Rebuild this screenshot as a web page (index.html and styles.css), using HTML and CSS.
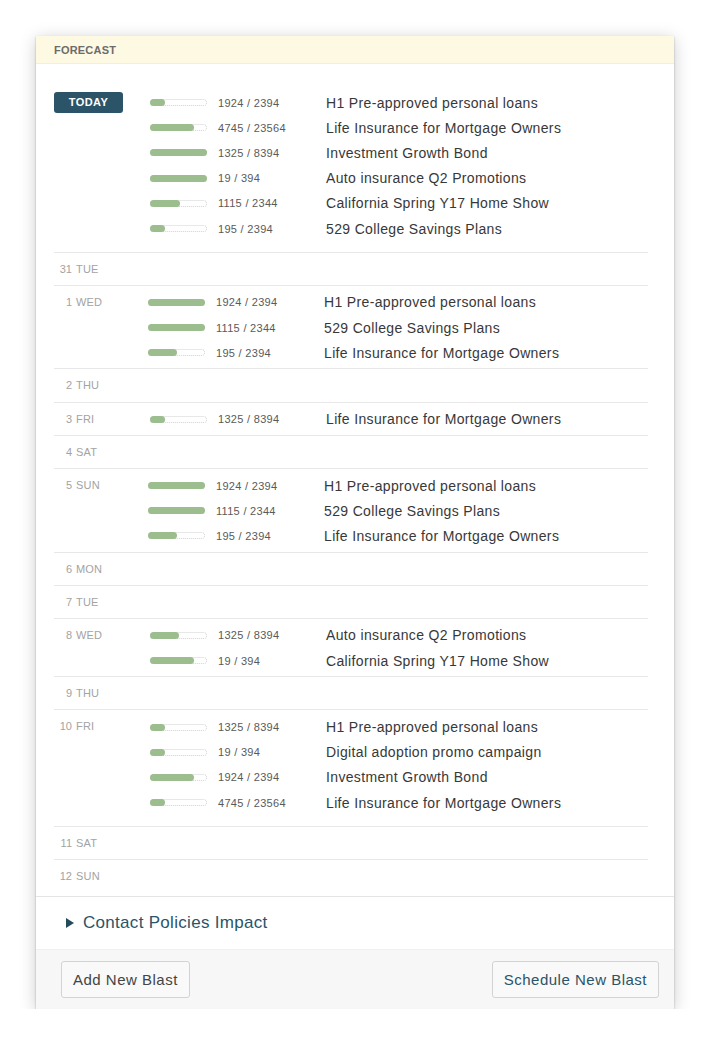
FILE: index.html
```html
<!DOCTYPE html>
<html>
<head>
<meta charset="utf-8">
<link rel="stylesheet" href="styles.css">
</head>
<body>
<div class="card">
  <div class="header">FORECAST</div>
  <div class="body">
    <div class="day today">
      <div class="label"><span class="badge">TODAY</span></div>
      <div class="items">
        <div class="item"><div class="bar"><div class="fill" style="width:15px"></div></div><span class="count">1924 / 2394</span><span class="name">H1 Pre-approved personal loans</span></div>
        <div class="item"><div class="bar"><div class="fill" style="width:44px"></div></div><span class="count">4745 / 23564</span><span class="name">Life Insurance for Mortgage Owners</span></div>
        <div class="item"><div class="bar"><div class="fill" style="width:57px"></div></div><span class="count">1325 / 8394</span><span class="name">Investment Growth Bond</span></div>
        <div class="item"><div class="bar"><div class="fill" style="width:57px"></div></div><span class="count">19 / 394</span><span class="name">Auto insurance Q2 Promotions</span></div>
        <div class="item"><div class="bar"><div class="fill" style="width:30px"></div></div><span class="count">1115 / 2344</span><span class="name">California Spring Y17 Home Show</span></div>
        <div class="item"><div class="bar"><div class="fill" style="width:15px"></div></div><span class="count">195 / 2394</span><span class="name">529 College Savings Plans</span></div>
      </div>
    </div>
    <div class="day"><div class="label"><span class="num">31</span><span class="dow">TUE</span></div></div>
    <div class="day">
      <div class="label"><span class="num">1</span><span class="dow">WED</span></div>
      <div class="items shift">
        <div class="item"><div class="bar"><div class="fill" style="width:57px"></div></div><span class="count">1924 / 2394</span><span class="name">H1 Pre-approved personal loans</span></div>
        <div class="item"><div class="bar"><div class="fill" style="width:57px"></div></div><span class="count">1115 / 2344</span><span class="name">529 College Savings Plans</span></div>
        <div class="item"><div class="bar"><div class="fill" style="width:29px"></div></div><span class="count">195 / 2394</span><span class="name">Life Insurance for Mortgage Owners</span></div>
      </div>
    </div>
    <div class="day"><div class="label"><span class="num">2</span><span class="dow">THU</span></div></div>
    <div class="day">
      <div class="label"><span class="num">3</span><span class="dow">FRI</span></div>
      <div class="items">
        <div class="item"><div class="bar"><div class="fill" style="width:15px"></div></div><span class="count">1325 / 8394</span><span class="name">Life Insurance for Mortgage Owners</span></div>
      </div>
    </div>
    <div class="day"><div class="label"><span class="num">4</span><span class="dow">SAT</span></div></div>
    <div class="day">
      <div class="label"><span class="num">5</span><span class="dow">SUN</span></div>
      <div class="items shift">
        <div class="item"><div class="bar"><div class="fill" style="width:57px"></div></div><span class="count">1924 / 2394</span><span class="name">H1 Pre-approved personal loans</span></div>
        <div class="item"><div class="bar"><div class="fill" style="width:57px"></div></div><span class="count">1115 / 2344</span><span class="name">529 College Savings Plans</span></div>
        <div class="item"><div class="bar"><div class="fill" style="width:29px"></div></div><span class="count">195 / 2394</span><span class="name">Life Insurance for Mortgage Owners</span></div>
      </div>
    </div>
    <div class="day"><div class="label"><span class="num">6</span><span class="dow">MON</span></div></div>
    <div class="day"><div class="label"><span class="num">7</span><span class="dow">TUE</span></div></div>
    <div class="day">
      <div class="label"><span class="num">8</span><span class="dow">WED</span></div>
      <div class="items">
        <div class="item"><div class="bar"><div class="fill" style="width:29px"></div></div><span class="count">1325 / 8394</span><span class="name">Auto insurance Q2 Promotions</span></div>
        <div class="item"><div class="bar"><div class="fill" style="width:44px"></div></div><span class="count">19 / 394</span><span class="name">California Spring Y17 Home Show</span></div>
      </div>
    </div>
    <div class="day"><div class="label"><span class="num">9</span><span class="dow">THU</span></div></div>
    <div class="day tall">
      <div class="label"><span class="num">10</span><span class="dow">FRI</span></div>
      <div class="items">
        <div class="item"><div class="bar"><div class="fill" style="width:15px"></div></div><span class="count">1325 / 8394</span><span class="name">H1 Pre-approved personal loans</span></div>
        <div class="item"><div class="bar"><div class="fill" style="width:15px"></div></div><span class="count">19 / 394</span><span class="name">Digital adoption promo campaign</span></div>
        <div class="item"><div class="bar"><div class="fill" style="width:44px"></div></div><span class="count">1924 / 2394</span><span class="name">Investment Growth Bond</span></div>
        <div class="item"><div class="bar"><div class="fill" style="width:15px"></div></div><span class="count">4745 / 23564</span><span class="name">Life Insurance for Mortgage Owners</span></div>
      </div>
    </div>
    <div class="day"><div class="label"><span class="num">11</span><span class="dow">SAT</span></div></div>
    <div class="day last"><div class="label"><span class="num">12</span><span class="dow">SUN</span></div></div>
  </div>
  <div class="policies"><span class="caret"></span><span class="policies-text">Contact Policies Impact</span></div>
  <div class="footer">
    <button class="btn">Add New Blast</button>
    <button class="btn primary">Schedule New Blast</button>
  </div>
</div>
</body>
</html>
```
FILE: styles.css
```css
html, body {
  margin: 0;
  padding: 0;
  background: #ffffff;
}
body {
  font-family: "Liberation Sans", Arial, Helvetica, sans-serif;
  padding: 36px 0 0 36px;
}
.card {
  width: 638px;
  height: 973px;
  background: #ffffff;
  box-shadow: 0 3px 16px rgba(0, 0, 0, 0.2), 0 1px 2px rgba(0, 0, 0, 0.25);
  display: flex;
  flex-direction: column;
}
.header {
  height: 27px;
  line-height: 29px;
  background: #fef9e3;
  border-bottom: 1px solid #f4efd9;
  padding-left: 18px;
  font-size: 11px;
  font-weight: bold;
  color: #6c6c6c;
  letter-spacing: 0.2px;
}
.body {
  padding: 0 26px 0 18px;
  flex: 1;
}
.day {
  display: flex;
  padding: 4px 0 3px;
  border-bottom: 1px solid #e8e8e8;
}
.day.today {
  padding: 26px 0 10.5px;
}
.day.tall {
  padding-bottom: 11px;
}
.day.last {
  border-bottom: none;
  padding-bottom: 4px;
}
.label {
  width: 96px;
  flex: none;
  height: 25.2px;
  line-height: 25.2px;
  font-size: 11px;
  color: #a3a3a3;
  display: flex;
  align-items: center;
}
.num {
  display: inline-block;
  width: 18px;
  text-align: right;
}
.dow {
  margin-left: 4px;
  letter-spacing: 0.2px;
}
.badge {
  display: block;
  width: 69px;
  height: 21px;
  line-height: 21px;
  background: #2b5468;
  border-radius: 3px;
  color: #ffffff;
  font-size: 11px;
  font-weight: bold;
  text-align: center;
  letter-spacing: 0.4px;
}
.items {
  display: flex;
  flex-direction: column;
}
.items.shift {
  margin-left: -2px;
}
.item {
  height: 25.2px;
  display: flex;
  align-items: center;
}
.bar {
  width: 57px;
  height: 7px;
  box-sizing: border-box;
  border: 1px dotted #d2d2d2;
  border-radius: 4px;
  flex: none;
}
.fill {
  height: 7px;
  margin: -1px;
  background: #9cbd8e;
  border-radius: 4px;
}
.count {
  width: 108px;
  margin-left: 11px;
  flex: none;
  font-size: 11px;
  color: #5a5a5a;
  letter-spacing: 0.3px;
}
.name {
  font-size: 14px;
  color: #383838;
  letter-spacing: 0.35px;
  white-space: nowrap;
}
.policies {
  height: 52px;
  border-top: 1px solid #e4e4e4;
  display: flex;
  align-items: center;
  padding-left: 30px;
}
.caret {
  width: 0;
  height: 0;
  border-top: 5.5px solid transparent;
  border-bottom: 5.5px solid transparent;
  border-left: 8px solid #244b5c;
  margin-right: 9px;
}
.policies-text {
  font-size: 17px;
  color: #2a5468;
  letter-spacing: 0.3px;
}
.footer {
  height: 60px;
  box-sizing: border-box;
  background: #f7f7f7;
  border-top: 1px solid #f0f0f0;
  display: flex;
  justify-content: space-between;
  align-items: flex-start;
  padding: 11px 15px 0 25px;
}
.btn {
  height: 37px;
  padding: 0 11px;
  background: #f9f9f9;
  border: 1px solid #d3d3d3;
  border-radius: 3px;
  font-family: "Liberation Sans", Arial, Helvetica, sans-serif;
  font-size: 15px;
  letter-spacing: 0.5px;
  color: #444444;
}
.btn.primary {
  color: #2a5468;
}
```
